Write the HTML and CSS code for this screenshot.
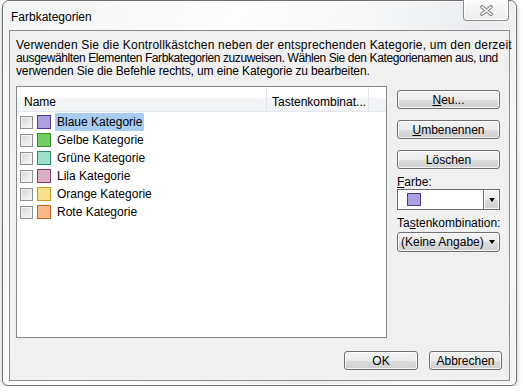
FILE: index.html
```html
<!DOCTYPE html>
<html lang="de">
<head>
<meta charset="UTF-8">
<title>Farbkategorien</title>
<link rel="stylesheet" href="styles.css">
</head>
<body>

<div class="window">
  <div class="titlebar">
    <span class="title">Farbkategorien</span>
    <button class="close">
      <svg width="13" height="11" viewBox="0 0 13 11">
        <path d="M2 1.8 L11 9.2 M11 1.8 L2 9.2" stroke="#7c7c7c" stroke-width="3.6" stroke-linecap="round"/>
        <path d="M2 1.8 L11 9.2 M11 1.8 L2 9.2" stroke="#fafafa" stroke-width="1.6" stroke-linecap="round"/>
      </svg>
    </button>
  </div>

  <div class="client">
    <div class="intro">
      <span class="line line1">Verwenden Sie die Kontrollkästchen neben der entsprechenden Kategorie, um den derzeit</span>
      <span class="line line2">ausgewählten Elementen Farbkategorien zuzuweisen. Wählen Sie den Kategorienamen aus, und</span>
      <span class="line line3">verwenden Sie die Befehle rechts, um eine Kategorie zu bearbeiten.</span>
    </div>

    <div class="main">
      <div class="listview">
        <div class="lv-header">
          <div class="col col-name">Name</div>
          <div class="col col-key">Tastenkombinat...</div>
          <div class="col col-rest"></div>
        </div>
        <ul class="rows">
          <li class="row selected"><span class="check"></span><span class="swatch sw-blue"></span><span class="label">Blaue Kategorie</span></li>
          <li class="row"><span class="check"></span><span class="swatch sw-green"></span><span class="label">Gelbe Kategorie</span></li>
          <li class="row"><span class="check"></span><span class="swatch sw-teal"></span><span class="label">Grüne Kategorie</span></li>
          <li class="row"><span class="check"></span><span class="swatch sw-pink"></span><span class="label">Lila Kategorie</span></li>
          <li class="row"><span class="check"></span><span class="swatch sw-yellow"></span><span class="label">Orange Kategorie</span></li>
          <li class="row"><span class="check"></span><span class="swatch sw-orange"></span><span class="label">Rote Kategorie</span></li>
        </ul>
      </div>

      <div class="side">
        <button class="btn"><u>N</u>eu...</button>
        <button class="btn"><u>U</u>mbenennen</button>
        <button class="btn">Löschen</button>
        <div class="field-label"><u>F</u>arbe:</div>
        <div class="colorbox">
          <span class="colorbox-value"><span class="swatch sw-blue"></span></span>
          <span class="drop"><span class="arrow"></span></span>
        </div>
        <div class="field-label">Ta<u>s</u>tenkombination:</div>
        <div class="select">
          <span>(Keine Angabe)</span>
          <span class="arrow"></span>
        </div>
      </div>
    </div>

    <div class="footer">
      <button class="btn btn-ok">OK</button>
      <button class="btn btn-cancel">Abbrechen</button>
    </div>
  </div>
</div>

</body>
</html>
```

FILE: styles.css
```css
body {
  margin: 0;
  background: #fff;
  font-family: "Liberation Sans", Arial, sans-serif;
  font-size: 12px;
  color: #000;
}
.window {
  box-sizing: border-box;
  width: 515px;
  height: 386px;
  margin-left: 2px;
  border: 1px solid #6f6f6f;
  border-radius: 7px 7px 6px 6px;
  background: linear-gradient(115deg, #f3f4f6 0%, #fdfdfd 35%, #f6f7f8 55%, #e9ebee 70%, #fafafa 85%, #f1f2f3 100%);
  box-shadow: inset 0 0 0 1px rgba(255,255,255,0.85), 0 2px 5px rgba(0,0,0,0.25);
  display: flex;
  flex-direction: column;
}
.titlebar {
  height: 29px;
  display: flex;
  align-items: flex-start;
  justify-content: space-between;
  flex-shrink: 0;
}
.title {
  margin: 9px 0 0 8px;
  line-height: 14px;
}
.close {
  width: 46px;
  height: 21px;
  margin: -1px 7px 0 0;
  padding: 0;
  border: 1px solid #8d8d8d;
  border-top: none;
  border-radius: 0 0 4px 4px;
  background: linear-gradient(#fbfbfb, #eeeeee);
  box-shadow: inset 0 0 0 1px rgba(255,255,255,0.9);
  display: flex;
  align-items: center;
  justify-content: center;
}
.close svg { display: block; }

.client {
  flex: 1;
  margin: 0 6px 4px 6px;
  border: 1px solid #8c8c8c;
  background: #f0f0f0;
  padding: 8px 7px 10px 6px;
  display: flex;
  flex-direction: column;
}
.intro {
  line-height: 13px;
  white-space: nowrap;
}
.line { display: block; }
.line1 { letter-spacing: 0.19px; }
.line2 { letter-spacing: -0.4px; }
.line3 { letter-spacing: -0.13px; }

.main {
  display: flex;
  gap: 10px;
  margin-top: 8px;
}
.listview {
  box-sizing: border-box;
  width: 371px;
  height: 252px;
  border: 1px solid #828790;
  background: #fff;
}
.lv-header {
  display: flex;
  height: 24px;
  background: linear-gradient(#ffffff 0%, #ffffff 45%, #f3f4f6 46%, #f3f4f6 100%);
  border-bottom: 1px solid #e4e7eb;
}
.col {
  box-sizing: border-box;
  padding: 8px 0 0 7px;
  line-height: 14px;
  border-right: 1px solid #e2e5e9;
}
.col-name { width: 250px; }
.col-key { width: 102px; padding-left: 5px; }
.col-rest { flex: 1; border-right: none; }

.rows {
  list-style: none;
  margin: 1px 0 0 0;
  padding: 0;
}
.row {
  display: flex;
  align-items: center;
  height: 18px;
  padding-left: 3px;
}
.check {
  box-sizing: border-box;
  width: 13px;
  height: 13px;
  border: 1px solid #8f8f8f;
  background: linear-gradient(135deg, #d6d6d6, #fafafa);
  box-shadow: inset 0 0 0 1px #f3f3f3;
}
.swatch {
  box-sizing: border-box;
  width: 14px;
  height: 14px;
  margin-left: 4px;
  border: 1px solid;
}
.label {
  margin-left: 4px;
  padding: 0 2px;
  line-height: 18px;
}
.row.selected .label { background: #a9cdf0; }

.sw-blue { background: #ae9fe0; border-color: #4f3a95; }
.sw-green { background: #72ce62; border-color: #3a8d2d; }
.sw-teal { background: #9ce0c9; border-color: #2f8a68; }
.sw-pink { background: #ddafc4; border-color: #8a3a62; }
.sw-yellow { background: #f7df8f; border-color: #c69a1c; }
.sw-orange { background: #f7b88a; border-color: #c3621f; }

.side {
  width: 103px;
  padding-top: 4px;
  display: flex;
  flex-direction: column;
}
.btn {
  box-sizing: border-box;
  height: 19px;
  padding: 0;
  font-family: inherit;
  font-size: 12px;
  color: #000;
  border: 1px solid #707070;
  border-radius: 3px;
  background: linear-gradient(#f2f2f2 0%, #ebebeb 50%, #dddddd 51%, #cfcfcf 100%);
  box-shadow: inset 0 0 0 1px rgba(255,255,255,0.75);
}
.side .btn { margin-bottom: 11px; }
.side .btn:nth-child(3) { margin-bottom: 0; }
.field-label {
  margin-top: 6px;
  line-height: 14px;
}
.colorbox {
  box-sizing: border-box;
  height: 21px;
  border: 1px solid #6e6e6e;
  background: #fff;
  display: flex;
}
.colorbox-value {
  flex: 1;
  display: flex;
  align-items: center;
  padding-left: 5px;
}
.colorbox-value .swatch { width: 14px; height: 13px; }
.drop {
  box-sizing: border-box;
  width: 16px;
  border-left: 1px solid #6e6e6e;
  background: linear-gradient(#f2f2f2 0%, #ebebeb 50%, #dddddd 51%, #cfcfcf 100%);
  box-shadow: inset 0 0 0 1px rgba(255,255,255,0.8);
  display: flex;
  align-items: center;
  justify-content: center;
}
.arrow {
  width: 0;
  height: 0;
  border-left: 3.5px solid transparent;
  border-right: 3.5px solid transparent;
  border-top: 4px solid #000;
}
.select {
  box-sizing: border-box;
  height: 20px;
  margin-top: 2px;
  padding: 0 4px 0 3px;
  border: 1px solid #707070;
  border-radius: 3px;
  background: linear-gradient(#f2f2f2 0%, #ebebeb 50%, #dddddd 51%, #cfcfcf 100%);
  box-shadow: inset 0 0 0 1px rgba(255,255,255,0.75);
  display: flex;
  align-items: center;
  justify-content: space-between;
}

.footer {
  margin-top: auto;
  display: flex;
  justify-content: flex-end;
  gap: 11px;
}
.btn-ok { width: 74px; }
.btn-cancel { width: 73px; }
```
